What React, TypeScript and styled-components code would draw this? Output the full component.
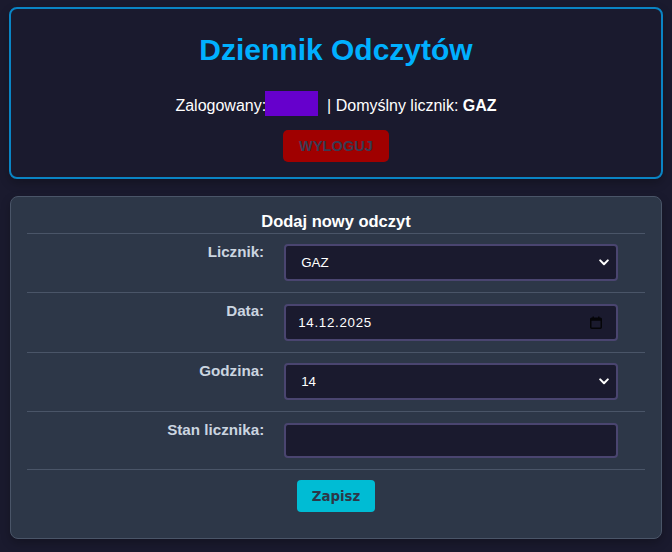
import React from "react";
import styled, { createGlobalStyle } from "styled-components";

const GlobalStyle = createGlobalStyle`
  html, body {
    margin: 0;
    padding: 0;
    background: #1a1a2e;
    font-family: "Liberation Sans", Arial, sans-serif;
    color: #ffffff;
  }
  * { box-sizing: border-box; }
`;

const Page = styled.div`
  display: flex;
  flex-direction: column;
  gap: 17px;
  padding: 7px 9px 13px;
`;

const Header = styled.header`
  border: 2px solid #0a84c4;
  border-radius: 8px;
  background: #1a1a2e;
  padding: 24px 20px 15px;
  display: flex;
  flex-direction: column;
  align-items: center;
  text-align: center;
  box-shadow: 0 4px 10px rgba(0, 0, 0, 0.25);
`;

const Title = styled.h1`
  margin: 0 0 23.5px;
  font-size: 30px;
  font-weight: bold;
  line-height: normal;
  color: #00b0ff;
`;

const InfoLine = styled.p`
  margin: 0 0 14px;
  font-size: 16px;
  line-height: normal;
  color: #ffffff;
`;

const Redacted = styled.span`
  display: inline-block;
  width: 53px;
  height: 25px;
  margin: 0 4.5px 0 -1px;
  vertical-align: -5px;
  background: #6600cc;
`;

const LogoutButton = styled.button`
  height: 32px;
  padding: 0 16px;
  border: none;
  border-radius: 5px;
  background: #a00000;
  color: #393b52;
  font-family: "Liberation Sans", Arial, sans-serif;
  font-size: 14.6px;
  font-weight: bold;
  text-transform: uppercase;
  cursor: pointer;
`;

const FormCard = styled.section`
  margin: 0 1px;
  background: #2d3748;
  border: 1px solid #4a5568;
  border-radius: 8px;
  padding: 15px 16px 16px;
  box-shadow: 0 4px 10px rgba(0, 0, 0, 0.25);
`;

const FormTitle = styled.div`
  font-size: 16.5px;
  font-weight: bold;
  line-height: 19px;
  text-align: center;
  color: #ffffff;
  padding-bottom: 2px;
  border-bottom: 1px solid #4a5568;
`;

const Row = styled.div`
  display: grid;
  grid-template-columns: 40% 60%;
  border-bottom: 1px solid #4a5568;
`;

const LabelCell = styled.label`
  padding: 9px 10px 0;
  text-align: right;
  font-size: 15.2px;
  font-weight: bold;
  line-height: normal;
  color: #cbd5e0;
`;

const FieldCell = styled.div`
  padding: 10.5px 10px 11px;
`;

const ControlBox = styled.div<{ $height?: number; $pl?: number; $pr?: number }>`
  width: 95.2%;
  height: ${(p) => p.$height ?? 37}px;
  display: flex;
  align-items: center;
  gap: 6px;
  padding: 0 ${(p) => p.$pr ?? 7}px 0 ${(p) => p.$pl ?? 15}px;
  background: #1a1a2e;
  border: 2px solid #4a4570;
  border-radius: 4px;
`;

const NativeSelect = styled.select`
  flex: 1;
  min-width: 0;
  height: 100%;
  appearance: none;
  -webkit-appearance: none;
  background: transparent;
  border: none;
  outline: none;
  padding: 0;
  color: #ffffff;
  font-family: "Liberation Sans", Arial, sans-serif;
  font-size: 13.333px;
  option {
    background: #1a1a2e;
    color: #ffffff;
  }
`;

const TextField = styled.input<{ $spacing?: number }>`
  flex: 1;
  min-width: 0;
  height: 100%;
  background: transparent;
  border: none;
  outline: none;
  padding: 0;
  color: #ffffff;
  font-family: "Liberation Sans", Arial, sans-serif;
  font-size: 13.333px;
  letter-spacing: ${(p) => p.$spacing ?? 0}px;
`;

const ActionRow = styled.div`
  display: flex;
  justify-content: center;
  padding: 10.5px 0 10px;
`;

const SaveButton = styled.button`
  height: 32px;
  padding: 0 15px;
  border: none;
  border-radius: 4px;
  background: #00bcd4;
  color: #2d3748;
  font-family: "DejaVu Sans", sans-serif;
  font-size: 13.333px;
  font-weight: bold;
  cursor: pointer;
`;

const Chevron = () => (
  <svg width="10" height="7" viewBox="0 0 10 7" aria-hidden="true">
    <path d="M1.2 1.4 L5 5.2 L8.8 1.4" fill="none" stroke="#ffffff" strokeWidth="2" strokeLinecap="round" strokeLinejoin="round" />
  </svg>
);

const CalendarIcon = () => (
  <svg width="12" height="13" viewBox="0 0 12 13" aria-hidden="true">
    <rect x="0.75" y="2.25" width="10.5" height="10" rx="1" fill="none" stroke="#050508" strokeWidth="1.5" />
    <rect x="0.75" y="2.25" width="10.5" height="2.5" fill="#050508" />
    <rect x="2.5" y="0.5" width="1.5" height="2.5" fill="#050508" />
    <rect x="8" y="0.5" width="1.5" height="2.5" fill="#050508" />
  </svg>
);

export default function App() {
  return (
    <>
      <GlobalStyle />
      <Page>
        <Header>
          <Title>Dziennik Odczytów</Title>
          <InfoLine>
            Zalogowany:<Redacted /> | Domyślny licznik: <strong>GAZ</strong>
          </InfoLine>
          <LogoutButton>Wyloguj</LogoutButton>
        </Header>

        <FormCard>
          <FormTitle>Dodaj nowy odczyt</FormTitle>

          <Row>
            <LabelCell htmlFor="licznik">Licznik:</LabelCell>
            <FieldCell>
              <ControlBox>
                <NativeSelect id="licznik" defaultValue="GAZ">
                  <option value="GAZ">GAZ</option>
                  <option value="PRAD">PRĄD</option>
                  <option value="WODA">WODA</option>
                </NativeSelect>
                <Chevron />
              </ControlBox>
            </FieldCell>
          </Row>

          <Row>
            <LabelCell htmlFor="data">Data:</LabelCell>
            <FieldCell>
              <ControlBox $pl={12} $pr={14}>
                <TextField id="data" defaultValue="14.12.2025" $spacing={0.7} />
                <CalendarIcon />
              </ControlBox>
            </FieldCell>
          </Row>

          <Row>
            <LabelCell htmlFor="godzina">Godzina:</LabelCell>
            <FieldCell>
              <ControlBox>
                <NativeSelect id="godzina" defaultValue="14">
                  {Array.from({ length: 24 }, (_, h) => (
                    <option key={h} value={String(h)}>
                      {h}
                    </option>
                  ))}
                </NativeSelect>
                <Chevron />
              </ControlBox>
            </FieldCell>
          </Row>

          <Row>
            <LabelCell htmlFor="stan">Stan licznika:</LabelCell>
            <FieldCell>
              <ControlBox $height={35} $pl={12}>
                <TextField id="stan" defaultValue="" />
              </ControlBox>
            </FieldCell>
          </Row>

          <ActionRow>
            <SaveButton>Zapisz</SaveButton>
          </ActionRow>
        </FormCard>
      </Page>
    </>
  );
}
